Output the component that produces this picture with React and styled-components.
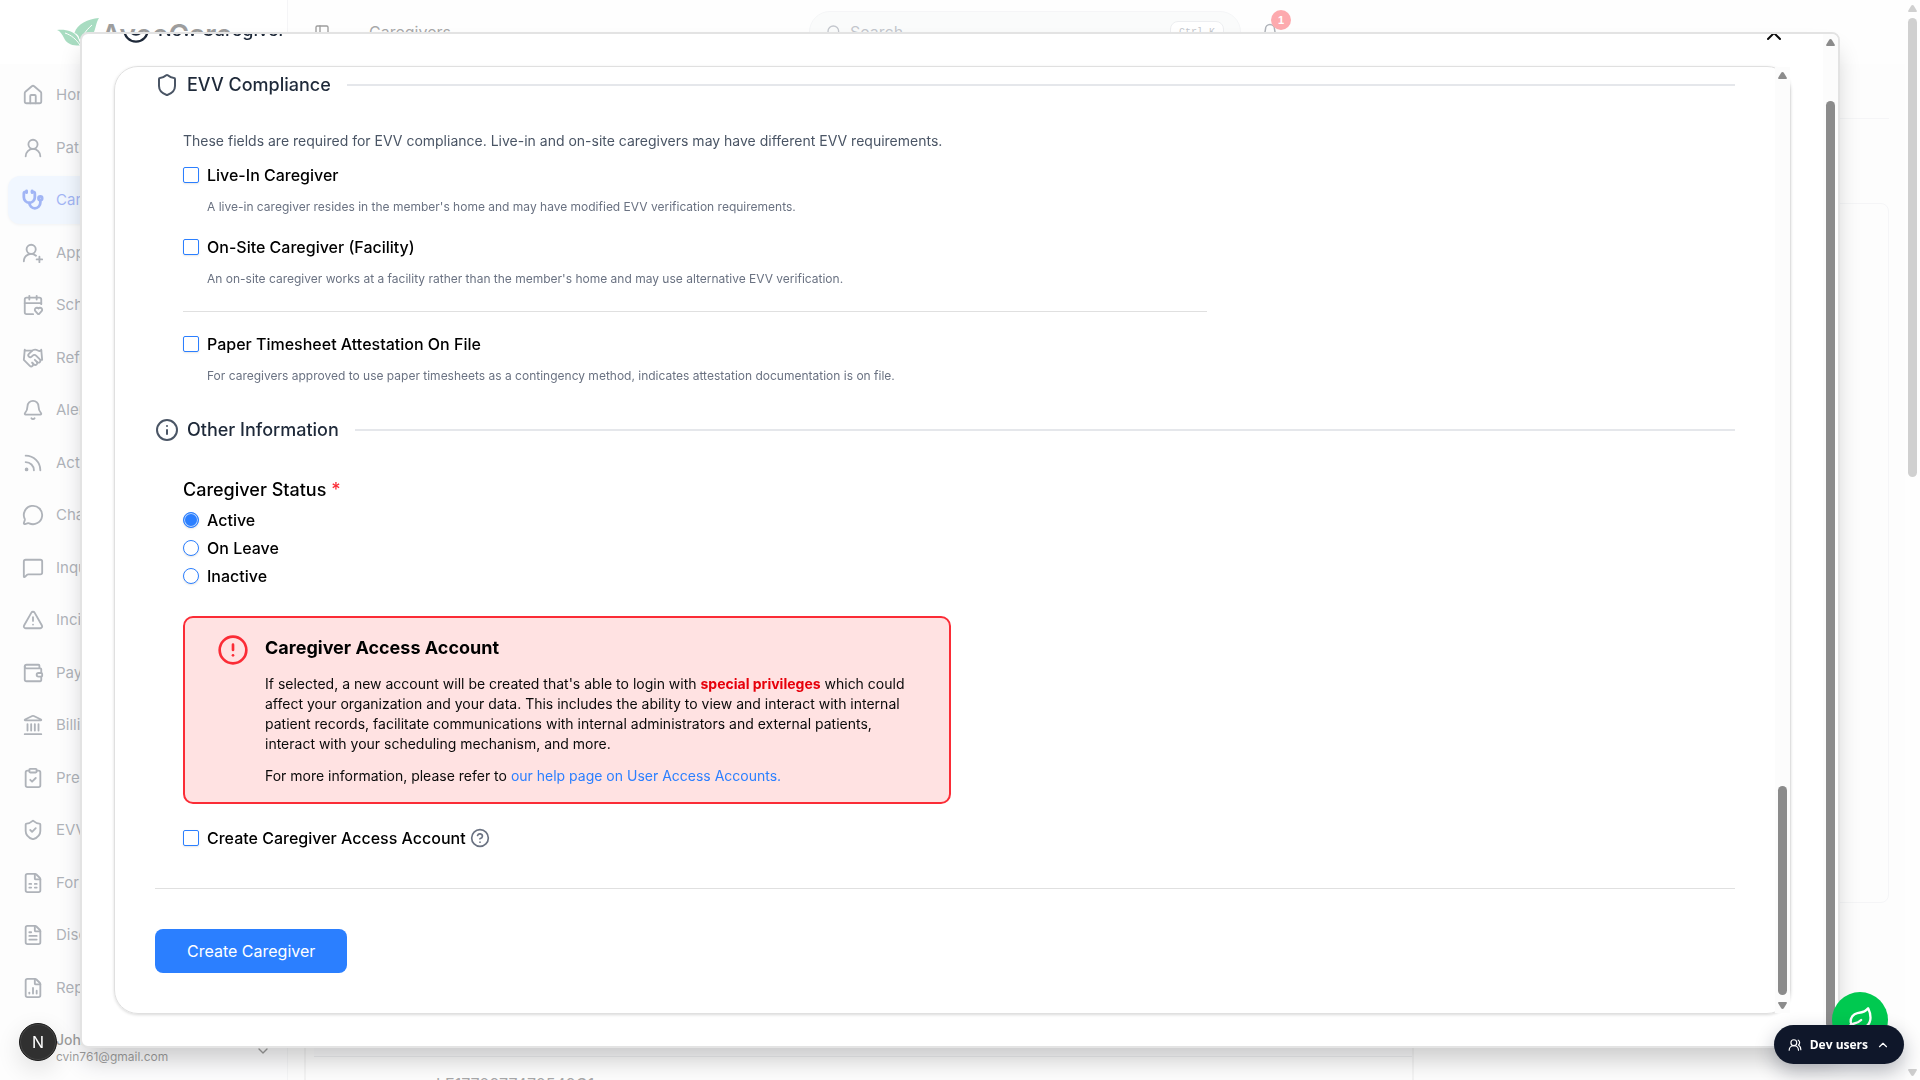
import { useState } from "react";
import styled, { createGlobalStyle } from "styled-components";
import {
  Bell,
  CalendarHeart,
  ChevronDown,
  ChevronUp,
  CircleAlert,
  CircleQuestionMark,
  ClipboardCheck,
  FileChartColumn,
  FileSpreadsheet,
  FileText,
  Handshake,
  House,
  Info,
  Landmark,
  Leaf,
  MessageCircle,
  MessageSquare,
  PanelLeft,
  Rss,
  Search,
  Shield,
  ShieldCheck,
  Smile,
  Stethoscope,
  TriangleAlert,
  UserRound,
  UserRoundPlus,
  UsersRound,
  Wallet,
  X,
} from "lucide-react";

const GlobalStyle = createGlobalStyle`
  * {
    box-sizing: border-box;
  }
  body {
    margin: 0;
    overflow: hidden;
    background: #fff;
    color: #0a0a0a;
    font-family: Inter, "Liberation Sans", sans-serif;
    font-size: 16px;
    line-height: 24px;
  }
  h1, h2, h3, p, ul, fieldset, legend {
    margin: 0;
    padding: 0;
    border: 0;
    list-style: none;
  }
`;

/* ---------- page behind the dialog ---------- */

const Page = styled.div`
  height: 100vh;
  display: flex;
  background: #fafafa;
  overflow: hidden;
`;

const Sidebar = styled.aside`
  width: 288px;
  flex-shrink: 0;
  display: flex;
  flex-direction: column;
  border-right: 1px solid #e5e7eb;
  background: #f9fafb;
`;

const Brand = styled.div`
  height: 64px;
  padding-left: 57px;
  display: flex;
  align-items: center;
  gap: 2px;
  flex-shrink: 0;
  background: #fff;
`;

const BrandName = styled.span`
  padding-top: 6px;
  font-size: 28px;
  font-weight: 600;
`;

const Nav = styled.nav`
  flex: 1;
  min-height: 0;
  padding: 7px 8px 0;
`;

const NavList = styled.ul`
  height: 100%;
  display: flex;
  flex-direction: column;
  justify-content: space-between;
`;

const NavLink = styled.a`
  height: 48px;
  padding: 0 14px;
  display: flex;
  align-items: center;
  gap: 12px;
  border-radius: 12px;
  font-size: 15px;
  text-decoration: none;
  color: ${(props) => (props.$active ? "#1447e6" : "#374151")};
  background: ${(props) => (props.$active ? "#dbeafe" : "transparent")};
  box-shadow: ${(props) => (props.$active ? "0 1px 3px rgba(0, 0, 0, 0.1)" : "none")};
`;

const UserBox = styled.div`
  height: 68px;
  padding: 10px 16px 0 56px;
  display: flex;
  align-items: center;
  justify-content: space-between;
  flex-shrink: 0;
`;

const UserText = styled.div`
  padding-bottom: 6px;
`;

const UserName = styled.div`
  font-size: 14px;
  font-weight: 500;
  line-height: 18px;
`;

const UserMail = styled.div`
  font-size: 12px;
  line-height: 16px;
`;

const Content = styled.div`
  flex: 1;
  min-width: 0;
  display: flex;
  flex-direction: column;
`;

const TopBar = styled.header`
  height: 64px;
  padding-left: 26px;
  display: flex;
  align-items: center;
  flex-shrink: 0;
  background: #fdfdfd;
`;

const Crumb = styled.h1`
  margin-left: 39px;
  width: 440px;
  font-size: 16px;
  font-weight: 400;
  color: #27272a;
`;

const SearchBox = styled.label`
  width: 432px;
  height: 42px;
  padding: 0 16px;
  display: flex;
  align-items: center;
  gap: 8px;
  border: 1px solid #e5e7eb;
  border-radius: 21px;
  background: #f3f6f5;
  color: #6a7282;
`;

const SearchInput = styled.input`
  flex: 1;
  min-width: 0;
  padding: 0;
  border: 0;
  background: transparent;
  font: inherit;
  &::placeholder {
    color: #6a7282;
    opacity: 1;
  }
`;

const Kbd = styled.kbd`
  padding: 2px 8px 0;
  border: 1px solid #d1d5db;
  border-radius: 8px;
  background: #fff;
  color: #6a7282;
  font-family: "Liberation Mono", monospace;
  font-size: 10px;
  line-height: 18px;
`;

const BellButton = styled.button`
  position: relative;
  margin-left: 20px;
  padding: 0;
  display: flex;
  border: 0;
  background: none;
  color: #374151;
`;

const Count = styled.span`
  position: absolute;
  left: 10px;
  top: -13px;
  width: 20px;
  height: 20px;
  border-radius: 10px;
  background: #fb2c36;
  color: #fff;
  font-size: 11px;
  font-weight: 700;
  line-height: 20px;
  text-align: center;
`;

const Main = styled.main`
  flex: 1;
  min-height: 0;
  padding: 0 16px;
  overflow: hidden;
`;

const Toolbar = styled.div`
  height: 55px;
  border-bottom: 1px solid #e5e7eb;
`;

const Card = styled.section`
  height: 700px;
  margin-top: 84px;
  border: 1px solid #e5e7eb;
  border-radius: 8px;
`;

const Results = styled.section`
  width: 70%;
  margin-top: 56px;
  padding-left: 8px;
  border: 2px solid #e2e2e2;
`;

const ResultsHead = styled.div`
  height: 96px;
  border-bottom: 1px solid #d1d5db;
  background: #f3f4f6;
`;

const ResultsRow = styled.div`
  padding: 15px 122px;
  color: #27272a;
`;

/* ---------- scroll bars ---------- */

const Track = styled.div`
  width: 15px;
  flex-shrink: 0;
  padding: 5px 3px 4px;
  display: flex;
  flex-direction: column;
  justify-content: space-between;
  background: #fcfcfc;
`;

const Rail = styled.div`
  flex: 1;
  margin: 6px 0 7px;
  display: flex;
  flex-direction: column;
  justify-content: ${(props) => props.$align};
`;

const Thumb = styled.div`
  height: ${(props) => props.$size}%;
  border-radius: 5px;
  background: #8b8b8b;
`;

const ScrollBar = ({ size, align = "flex-end" }) => (
  <Track>
    <svg width="9" height="7" viewBox="0 0 9 7" fill="#8b8b8b">
      <path d="M4.5 0C5 0 5.4.3 5.8.8L8.7 5.4C9.2 6.3 8.9 7 8 7H1C.1 7-.2 6.3.3 5.4L3.2.8C3.6.3 4 0 4.5 0Z" />
    </svg>
    <Rail $align={align}>
      <Thumb $size={size} />
    </Rail>
    <svg width="9" height="7" viewBox="0 0 9 7" fill="#8b8b8b">
      <path d="M4.5 7C5 7 5.4 6.7 5.8 6.2L8.7 1.6C9.2.7 8.9 0 8 0H1C.1 0-.2.7.3 1.6L3.2 6.2C3.6 6.7 4 7 4.5 7Z" />
    </svg>
  </Track>
);

/* ---------- dialog ---------- */

const Overlay = styled.div`
  position: fixed;
  inset: 0;
  padding: 32px 80px;
  background: rgba(255, 255, 255, 0.6);
`;

const Dialog = styled.div`
  height: 100%;
  display: flex;
  border: 2px solid #e3e3e3;
  border-radius: 8px;
  background: #fff;
  box-shadow: 0 16px 24px -4px rgba(0, 0, 0, 0.2);
  overflow: hidden;
`;

const DialogBody = styled.div`
  flex: 1;
  min-width: 0;
  padding: 0 32px 32px;
  display: flex;
  flex-direction: column;
  justify-content: flex-end;
`;

const DialogHeader = styled.header`
  height: 73px;
  padding: 0 5px 0 8px;
  display: flex;
  align-items: center;
  gap: 8px;
  flex-shrink: 0;
  color: #1e2939;
`;

const DialogTitle = styled.h2`
  flex: 1;
  font-size: 18px;
  font-weight: 500;
  line-height: 28px;
`;

const CloseButton = styled.button`
  padding: 6px 0 0;
  display: flex;
  border: 0;
  background: none;
  color: #0a0a0a;
`;

const Panel = styled.div`
  height: calc(100% - 32px);
  flex-shrink: 0;
  display: flex;
  border: 1px solid #e0e0e0;
  border-radius: 24px;
  box-shadow: 0 1px 3px rgba(0, 0, 0, 0.15);
`;

const Form = styled.form`
  flex: 1;
  min-width: 0;
  padding: 4px 40px 40px;
`;

const SectionHead = styled.div`
  display: flex;
  align-items: center;
  gap: 8px;
  color: #4a5565;
`;

const SectionTitle = styled.h3`
  font-size: 18px;
  font-weight: 500;
  line-height: 28px;
  color: #1e2939;
`;

const Rule = styled.div`
  flex: 1;
  height: 2px;
  margin-left: 8px;
  background: #e5e7eb;
`;

const SectionBody = styled.div`
  padding: 32px 28px;
`;

const Lead = styled.p`
  margin-bottom: 12px;
  font-size: 14px;
  line-height: 20px;
  color: #4a5565;
`;

const Options = styled.div`
  max-width: 1024px;
  display: flex;
  flex-direction: column;
  gap: 20px;
`;

const Divider = styled.hr`
  width: 100%;
  height: 1px;
  margin: 4px 0 0;
  border: 0;
  background: #e0e0e0;
`;

const Choice = styled.label`
  display: flex;
  align-items: center;
  gap: 8px;
  font-weight: 500;
  color: #000;
`;

const Tick = styled.input`
  appearance: none;
  width: 16px;
  height: 16px;
  margin: 0;
  flex-shrink: 0;
  border: 1px solid #2b7fff;
  border-radius: ${(props) => (props.type === "radio" ? "8px" : "2px")};
  background: #fff;
  box-shadow: 0 1px 2px rgba(0, 0, 0, 0.1);
  &:checked {
    background: #2b7fff;
    box-shadow: inset 0 0 0 1px #b5d3ff, 0 1px 2px rgba(0, 0, 0, 0.1);
  }
`;

const Hint = styled.p`
  margin: 12px 0 0 24px;
  font-size: 12px;
  line-height: 16px;
  color: #6a7282;
`;

const Status = styled.fieldset`
  display: flex;
  flex-direction: column;
  gap: 4px;
`;

const StatusTitle = styled.legend`
  margin-bottom: 4px;
  font-size: 18px;
  font-weight: 500;
  line-height: 28px;
  color: #000;
`;

const Required = styled.span`
  color: #fb2c36;
`;

const Warning = styled.div`
  max-width: 768px;
  margin: 28px 0 22px;
  padding: 16px 32px;
  display: flex;
  align-items: flex-start;
  gap: 16px;
  border: 2px solid #fb2c36;
  border-radius: 10px;
  background: #ffe2e2;
  font-size: 14px;
  line-height: 20px;
  & > svg {
    flex-shrink: 0;
    color: #fb2c36;
  }
`;

const WarningText = styled.div`
  display: flex;
  flex-direction: column;
  gap: 12px;
`;

const WarningTitle = styled.h4`
  margin: 0;
  font-size: 18px;
  font-weight: 700;
  line-height: 28px;
  color: #000;
`;

const Strong = styled.strong`
  font-weight: 700;
  color: #e7000b;
`;

const HelpLink = styled.a`
  color: #2b7fff;
  text-decoration: none;
`;

const AccountRow = styled.div`
  display: flex;
  align-items: center;
  gap: 4px;
  color: #6a7282;
`;

const Footer = styled.footer`
  margin-top: 6px;
  padding-top: 40px;
  border-top: 1px solid #e0e0e0;
`;

const Submit = styled.button`
  height: 44px;
  padding: 0 32px;
  border: 0;
  border-radius: 8px;
  background: #2b7fff;
  color: #fff;
  font: inherit;
`;

/* ---------- floating buttons ---------- */

const LeafButton = styled.button`
  position: fixed;
  right: 32px;
  bottom: 32px;
  width: 56px;
  height: 56px;
  padding: 0;
  display: flex;
  align-items: center;
  justify-content: center;
  border: 0;
  border-radius: 50%;
  background: #00c950;
  color: #fff;
`;

const DevUsers = styled.button`
  position: fixed;
  right: 16px;
  bottom: 16px;
  height: 39px;
  padding: 0 14px;
  display: flex;
  align-items: center;
  gap: 8px;
  border: 0;
  border-radius: 20px;
  background: #0f172a;
  color: #fff;
  box-shadow: 0 8px 20px rgba(15, 23, 42, 0.3);
  font-family: "Open Sans", "Noto Sans", sans-serif;
  font-size: 12px;
  font-weight: 700;
`;

const NextBadge = styled.button`
  position: fixed;
  left: 19px;
  bottom: 19px;
  width: 38px;
  height: 38px;
  padding: 0;
  border: 1px solid #1a1a1a;
  border-radius: 50%;
  background: #303030;
  color: #fff;
  box-shadow: inset 0 0 0 1px #454545, 0 8px 24px rgba(0, 0, 0, 0.12);
  font-family: Inter, sans-serif;
  font-size: 16px;
`;

const navItems = [
  { label: "Home", icon: House },
  { label: "Patients", icon: UserRound },
  { label: "Caregivers", icon: Stethoscope, active: true },
  { label: "Applicants", icon: UserRoundPlus },
  { label: "Schedule", icon: CalendarHeart },
  { label: "Referrals", icon: Handshake },
  { label: "Alerts", icon: Bell },
  { label: "Activity", icon: Rss },
  { label: "Chat", icon: MessageCircle },
  { label: "Inquiries", icon: MessageSquare },
  { label: "Incidents", icon: TriangleAlert },
  { label: "Payroll", icon: Wallet },
  { label: "Billing", icon: Landmark },
  { label: "Pre-Billing", icon: ClipboardCheck },
  { label: "EVV", icon: ShieldCheck },
  { label: "Forms", icon: FileSpreadsheet },
  { label: "Disclosures", icon: FileText },
  { label: "Reports", icon: FileChartColumn },
];

const statuses = ["Active", "On Leave", "Inactive"];

const LogoMark = () => (
  <svg width="42" height="28" viewBox="0 0 42 28">
    <path
      fill="#26a864"
      d="M42 0C31 1 20 6 17.500 15C20 15.500 22 18 22.500 21C26 23 33 22 37 14C39 9 39 5 42 0Z"
    />
    <path
      fill="#26a864"
      d="M0 12C8 11 17 13 20.500 19C22 22 23 25 24 27C16 29 9 25 7 20C5 16 3 13 0 12Z"
    />
    <path
      fill="none"
      stroke="#fff"
      d="M8 15C14 17 19 21 23 27C24 20 28 13 35 7"
    />
  </svg>
);

const CheckOption = ({ label, hint }) => (
  <div>
    <Choice>
      <Tick type="checkbox" />
      {label}
    </Choice>
    <Hint>{hint}</Hint>
  </div>
);

const Section = ({ icon: Icon, title, children }) => (
  <section>
    <SectionHead>
      <Icon size={24} />
      <SectionTitle>{title}</SectionTitle>
      <Rule />
    </SectionHead>
    <SectionBody>{children}</SectionBody>
  </section>
);

const CaregiverForm = () => {
  const [status, setStatus] = useState("Active");
  return (
    <Form onSubmit={(e) => e.preventDefault()}>
      <Section icon={Shield} title="EVV Compliance">
        <Lead>
          These fields are required for EVV compliance. Live-in and on-site
          caregivers may have different EVV requirements.
        </Lead>
        <Options>
          <CheckOption
            label="Live-In Caregiver"
            hint="A live-in caregiver resides in the member's home and may have modified EVV verification requirements."
          />
          <CheckOption
            label="On-Site Caregiver (Facility)"
            hint="An on-site caregiver works at a facility rather than the member's home and may use alternative EVV verification."
          />
          <Divider />
          <CheckOption
            label="Paper Timesheet Attestation On File"
            hint="For caregivers approved to use paper timesheets as a contingency method, indicates attestation documentation is on file."
          />
        </Options>
      </Section>
      <Section icon={Info} title="Other Information">
        <Status>
          <StatusTitle>
            Caregiver Status <Required>*</Required>
          </StatusTitle>
          {statuses.map((name) => (
            <Choice key={name}>
              <Tick
                type="radio"
                name="status"
                checked={status === name}
                onChange={() => setStatus(name)}
              />
              {name}
            </Choice>
          ))}
        </Status>
        <Warning>
          <CircleAlert size={32} />
          <WarningText>
            <WarningTitle>Caregiver Access Account</WarningTitle>
            <p>
              If selected, a new account will be created that's able to login
              with <Strong>special privileges</Strong> which could affect your
              organization and your data. This includes the ability to view and
              interact with internal patient records, facilitate communications
              with internal administrators and external patients, interact with
              your scheduling mechanism, and more.
            </p>
            <p>
              For more information, please refer to{" "}
              <HelpLink href="#help">
                our help page on User Access Accounts.
              </HelpLink>
            </p>
          </WarningText>
        </Warning>
        <AccountRow>
          <Choice>
            <Tick type="checkbox" />
            Create Caregiver Access Account
          </Choice>
          <CircleQuestionMark size={20} />
        </AccountRow>
      </Section>
      <Footer>
        <Submit type="submit">Create Caregiver</Submit>
      </Footer>
    </Form>
  );
};

const App = () => (
  <>
    <GlobalStyle />
    <Page>
      <Sidebar>
        <Brand>
          <LogoMark />
          <BrandName>AveeCare</BrandName>
        </Brand>
        <Nav>
          <NavList>
            {navItems.map(({ label, icon: Icon, active }) => (
              <li key={label}>
                <NavLink href="#" $active={active}>
                  <Icon size={22} strokeWidth={active ? 3 : 2} />
                  {label}
                </NavLink>
              </li>
            ))}
          </NavList>
        </Nav>
        <UserBox>
          <UserText>
            <UserName>John Doe</UserName>
            <UserMail>cvin761@gmail.com</UserMail>
          </UserText>
          <ChevronDown size={16} />
        </UserBox>
      </Sidebar>
      <Content>
        <TopBar>
          <PanelLeft size={16} />
          <Crumb>Caregivers</Crumb>
          <SearchBox>
            <Search size={16} />
            <SearchInput placeholder="Search" aria-label="Search" />
            <Kbd>Ctrl K</Kbd>
          </SearchBox>
          <BellButton aria-label="Notifications">
            <Bell size={18} />
            <Count>1</Count>
          </BellButton>
        </TopBar>
        <Main>
          <Toolbar />
          <Card />
          <Results>
            <ResultsHead />
            <ResultsRow>LE1770977470549G1</ResultsRow>
          </Results>
        </Main>
      </Content>
      <ScrollBar size={44} align="flex-start" />
    </Page>
    <Overlay>
      <Dialog role="dialog" aria-label="New Caregiver">
        <DialogBody>
          <DialogHeader>
            <Smile size={28} />
            <DialogTitle>New Caregiver</DialogTitle>
            <CloseButton aria-label="Close">
              <X size={24} />
            </CloseButton>
          </DialogHeader>
          <Panel>
            <CaregiverForm />
            <ScrollBar size={23} />
          </Panel>
        </DialogBody>
        <ScrollBar size={95} />
      </Dialog>
    </Overlay>
    <LeafButton aria-label="Assistant">
      <Leaf size={28} />
    </LeafButton>
    <DevUsers>
      <UsersRound size={14} />
      Dev users
      <ChevronUp size={14} />
    </DevUsers>
    <NextBadge aria-label="Open developer tools">N</NextBadge>
  </>
);

export default App;
